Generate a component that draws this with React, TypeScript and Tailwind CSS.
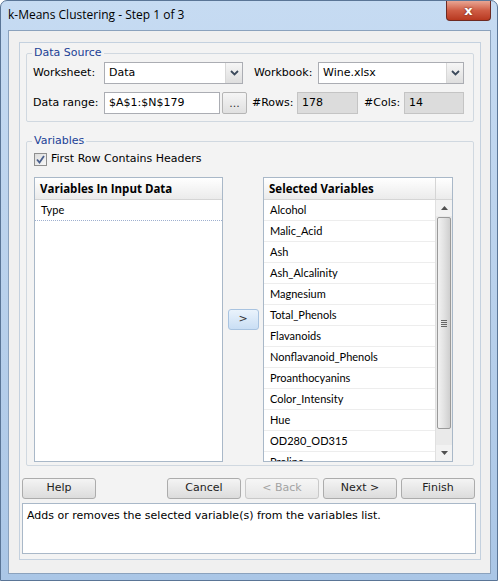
import React from "react";

const tahoma = { fontFamily: '"DejaVu Sans", Tahoma, sans-serif' };
const segoe = { fontFamily: '"Open Sans", "Noto Sans", sans-serif' };
const listFont = { fontFamily: 'Lato, "Open Sans", sans-serif' };

function Chevron() {
  return (
    <svg width="9" height="6" viewBox="0 0 9 6">
      <path d="M1 1 L4.5 4.5 L8 1" stroke="#3c4a5c" strokeWidth="1.8" fill="none" />
    </svg>
  );
}

function Select({ value, w }: { value: string; w: string }) {
  return (
    <div className={`${w} h-[22px] flex bg-white border border-[#abadb3]`}>
      <div className="flex-1 flex items-center pl-[4px] text-[11px] text-black" style={tahoma}>
        {value}
      </div>
      <div className="w-[17px] h-full flex items-center justify-center border-l border-[#d8d8d8] bg-gradient-to-b from-[#f6f6f6] to-[#dedede]">
        <Chevron />
      </div>
    </div>
  );
}

function Btn({ label, disabled, w = "w-[74px]" }: { label: string; disabled?: boolean; w?: string }) {
  return (
    <div
      className={`${w} h-[21px] flex items-center justify-center rounded-[3px] border text-[11px] ${
        disabled
          ? "border-[#c9c9c9] bg-gradient-to-b from-[#f6f6f6] to-[#e6e6e6] text-[#a3a3a3]"
          : "border-[#acacac] bg-gradient-to-b from-[#f4f4f4] to-[#dcdcdc] text-[#222]"
      }`}
      style={tahoma}
    >
      {label}
    </div>
  );
}

const selected = [
  "Alcohol",
  "Malic_Acid",
  "Ash",
  "Ash_Alcalinity",
  "Magnesium",
  "Total_Phenols",
  "Flavanoids",
  "Nonflavanoid_Phenols",
  "Proanthocyanins",
  "Color_Intensity",
  "Hue",
  "OD280_OD315",
  "Proline",
];

export default function App() {
  return (
    <div className="w-[498px] h-[581px] relative overflow-hidden rounded-t-[7px] border border-[#5a7596] bg-gradient-to-b from-[#c6dbf2] via-[#b9d1ec] to-[#aac6e6]">
      {/* title bar */}
      <div className="h-[29px] flex items-center pl-[7px] pb-[1px] text-[12px] text-black" style={segoe}>
        k-Means Clustering - Step 1 of 3
      </div>
      <div className="absolute top-0 right-[6px] w-[45px] h-[20px] rounded-b-[4px] border border-[#6d2a22] border-t-0 bg-gradient-to-b from-[#e8a593] via-[#cf5d45] to-[#b8381f] flex items-center justify-center">
        <span className="text-white font-bold text-[13px] leading-none" style={{ fontFamily: '"DejaVu Sans", sans-serif', textShadow: "0 0 2px #5a1a10" }}>
          x
        </span>
      </div>

      {/* client area */}
      <div className="ml-[7px] w-[483px] h-[544px] border border-[#8ba2bd] bg-[#f0f0f0] pl-[10px] pt-[11px]">
        <div className="w-[462px] h-[518px] border border-[#c4d1df] bg-[#f3f3f3] flex flex-col">
          {/* Data Source */}
          <div className="relative ml-[6px] mt-[10px] w-[448px] h-[69px] border border-[#d0d8e0] rounded-[2px] pl-[6px] pt-[8px] flex flex-col gap-[8px]">
            <span className="absolute -top-[8px] left-[5px] px-[2px] bg-[#f3f3f3] text-[11px] leading-[14px] text-[#1b4196]" style={tahoma}>
              Data Source
            </span>
            <div className="flex items-center">
              <div className="w-[71px] text-[11px] text-black" style={tahoma}>Worksheet:</div>
              <Select value="Data" w="w-[139px]" />
              <div className="ml-[11px] w-[64px] text-[11px] text-black" style={tahoma}>Workbook:</div>
              <Select value="Wine.xlsx" w="w-[146px]" />
            </div>
            <div className="flex items-center">
              <div className="w-[71px] text-[11px] text-black" style={tahoma}>Data range:</div>
              <div className="w-[116px] h-[22px] bg-white border border-[#abadb3] flex items-center pl-[4px] text-[11px]" style={tahoma}>
                $A$1:$N$179
              </div>
              <div className="ml-[2px] w-[25px] h-[22px] rounded-[2px] border border-[#b5b5b5] bg-gradient-to-b from-[#f5f5f5] to-[#e0e0e0] flex items-end justify-center pb-[4px] text-[11px] leading-none text-[#333]" style={tahoma}>
                ...
              </div>
              <div className="ml-[5px] w-[45px] text-[11px] text-black" style={tahoma}>#Rows:</div>
              <div className="w-[61px] h-[22px] bg-[#dcdcdc] border border-[#c4c4c4] flex items-center pl-[4px] text-[11px]" style={tahoma}>
                178
              </div>
              <div className="ml-[6px] w-[40px] text-[11px] text-black" style={tahoma}>#Cols:</div>
              <div className="w-[60px] h-[22px] bg-[#dcdcdc] border border-[#c4c4c4] flex items-center pl-[4px] text-[11px]" style={tahoma}>
                14
              </div>
            </div>
          </div>

          {/* Variables */}
          <div className="relative ml-[6px] mt-[19px] w-[448px] h-[325px] border border-[#d0d8e0] rounded-[2px] pl-[7px] pt-[11px] flex flex-col">
            <span className="absolute -top-[8px] left-[5px] px-[2px] bg-[#f3f3f3] text-[11px] leading-[14px] text-[#1b4196]" style={tahoma}>
              Variables
            </span>
            <div className="flex items-center h-[13px]">
              <div className="w-[13px] h-[13px] border border-[#8f8f8f] bg-gradient-to-br from-[#dcdcdc] to-[#f8f8f8] flex items-center justify-center">
                <svg width="9" height="9" viewBox="0 0 9 9">
                  <path d="M1 4.5 L3.5 7.5 L8 1" stroke="#4a5f8c" strokeWidth="1.8" fill="none" />
                </svg>
              </div>
              <span className="ml-[4px] text-[11px] text-black" style={tahoma}>First Row Contains Headers</span>
            </div>

            <div className="flex mt-[11px]">
              {/* left list */}
              <div className="w-[189px] h-[285px] border border-[#a9b8c8] bg-white flex flex-col">
                <div className="h-[22px] flex items-center pl-[5px] bg-gradient-to-b from-[#ffffff] to-[#ebebeb] border-b border-[#d5d5d5] text-[11.5px] font-bold text-black" style={segoe}>
                  Variables In Input Data
                </div>
                <div className="h-[21px] flex items-center pl-[6px] border-b border-dotted border-[#9fb0cf] text-[11px] text-black" style={listFont}>
                  Type
                </div>
              </div>

              {/* arrow */}
              <div className="w-[40px] flex items-center justify-center">
                <div className="w-[31px] h-[21px] rounded-[3px] border border-[#a8c3e0] bg-gradient-to-b from-[#eaf3fc] to-[#c9def4] flex items-center justify-center text-[11px] text-[#333]" style={tahoma}>
                  &gt;
                </div>
              </div>

              {/* right list */}
              <div className="w-[190px] h-[285px] border border-[#a9b8c8] bg-white flex flex-col overflow-hidden">
                <div className="h-[22px] shrink-0 flex bg-gradient-to-b from-[#ffffff] to-[#ebebeb] border-b border-[#d5d5d5]">
                  <div className="flex-1 flex items-center pl-[5px] text-[11.5px] font-bold text-black" style={segoe}>
                    Selected Variables
                  </div>
                  <div className="w-[17px] border-l border-[#d5d5d5]" />
                </div>
                <div className="flex flex-1 overflow-hidden">
                  <div className="flex-1 flex flex-col overflow-hidden">
                    {selected.map((s) => (
                      <div key={s} className="h-[21px] shrink-0 flex items-center pl-[6px] border-b border-[#ededed] text-[11px] text-black" style={listFont}>
                        {s}
                      </div>
                    ))}
                  </div>
                  {/* scrollbar */}
                  <div className="w-[17px] flex flex-col bg-[#eaeaea] border-l border-[#e0e0e0]">
                    <div className="h-[16px] flex items-center justify-center bg-[#f2f2f2]">
                      <svg width="7" height="4" viewBox="0 0 7 4"><path d="M0 4 L3.5 0 L7 4 Z" fill="#505050" /></svg>
                    </div>
                    <div className="mt-[1px] h-[212px] mx-[1px] rounded-[2px] border border-[#9a9a9a] bg-gradient-to-r from-[#f2f2f2] via-[#e2e2e2] to-[#cfcfcf] flex items-center justify-center">
                      <div className="flex flex-col gap-[1px]">
                        <div className="w-[6px] h-[1px] bg-[#666]" />
                        <div className="w-[6px] h-[1px] bg-[#666]" />
                        <div className="w-[6px] h-[1px] bg-[#666]" />
                        <div className="w-[6px] h-[1px] bg-[#666]" />
                      </div>
                    </div>
                    <div className="flex-1" />
                    <div className="h-[16px] flex items-center justify-center bg-[#f2f2f2]">
                      <svg width="7" height="4" viewBox="0 0 7 4"><path d="M0 0 L3.5 4 L7 0 Z" fill="#505050" /></svg>
                    </div>
                  </div>
                </div>
              </div>
            </div>
          </div>

          {/* buttons */}
          <div className="flex mt-[12px] ml-[2px]">
            <Btn label="Help" />
            <div className="ml-[71px] flex gap-[4px]">
              <Btn label="Cancel" />
              <Btn label="< Back" disabled />
              <Btn label="Next >" />
              <Btn label="Finish" />
            </div>
          </div>

          {/* description */}
          <div className="ml-[2px] mt-[4px] w-[454px] h-[51px] border border-[#a9b8c8] bg-white px-[4px] pt-[4px] text-[11px] text-black" style={tahoma}>
            Adds or removes the selected variable(s) from the variables list.
          </div>
        </div>
      </div>
    </div>
  );
}
